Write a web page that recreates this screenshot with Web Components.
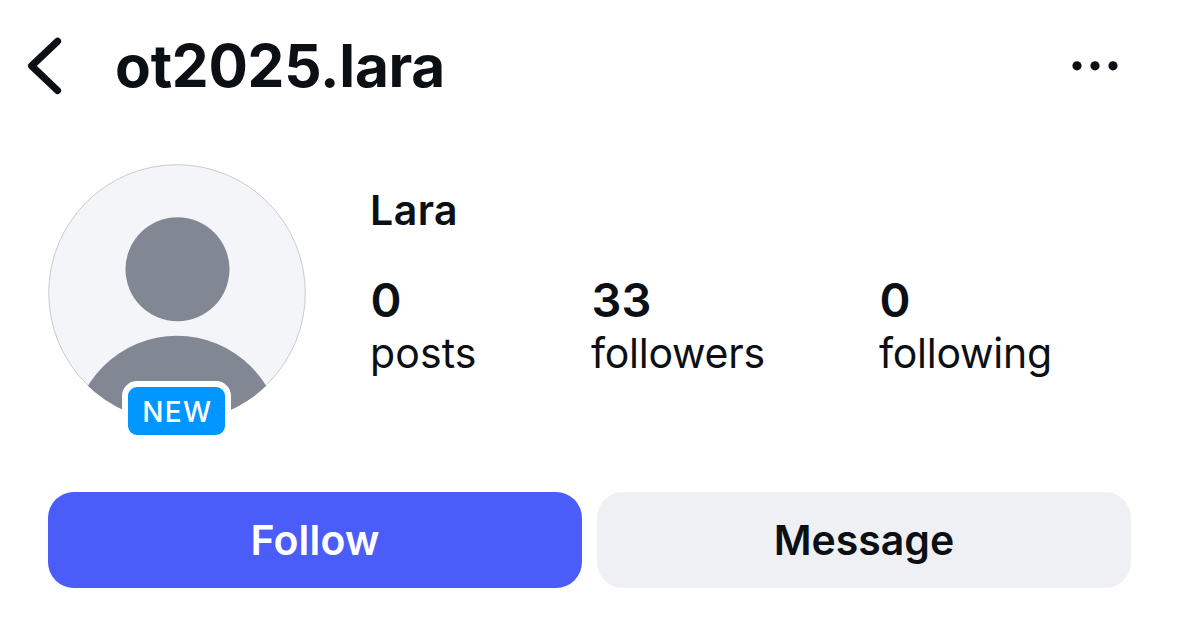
<!DOCTYPE html>
<html lang="en">
<head>
<meta charset="utf-8">
<title>ot2025.lara</title>
<style>
  body {
    margin: 0;
    background: #fff;
    color: #0c1014;
    font-family: Inter, "Liberation Sans", sans-serif;
  }
</style>
</head>
<body>
<profile-page></profile-page>

<script>
class ProfileHeader extends HTMLElement {
  constructor() {
    super();
    this.attachShadow({ mode: "open" });
    this.shadowRoot.innerHTML = `
      <style>
        :host {
          display: flex;
          align-items: center;
          height: 132px;
          padding: 0 57px 0 24px;
        }

        svg {
          display: block;
          flex: none;
        }

        h1 {
          flex: 1;
          margin: 0 0 0 49px;
          font-size: 58.5px;
          line-height: 72px;
          font-weight: 700;
          letter-spacing: -0.25px;
        }
      </style>

      <svg width="42" height="64" viewBox="0 0 42 64" fill="none" stroke="#0c1014"
        stroke-width="7.2" stroke-linecap="round" stroke-linejoin="round">
        <path d="M33.5 7.3 7.6 31.8 33.5 56.5"/>
      </svg>
      <h1><slot></slot></h1>
      <svg width="54" height="16" viewBox="0 0 54 16" fill="#0c1014">
        <circle cx="9" cy="7.8" r="4.6"/>
        <circle cx="27" cy="7.8" r="4.6"/>
        <circle cx="45" cy="7.8" r="4.6"/>
      </svg>
    `;
  }
}

class ProfileAvatar extends HTMLElement {
  constructor() {
    super();
    this.attachShadow({ mode: "open" });
    this.shadowRoot.innerHTML = `
      <style>
        :host {
          display: block;
          position: relative;
          width: 258px;
          height: 258px;
        }

        svg {
          display: block;
        }

        .badge {
          position: absolute;
          left: 74.3px;
          top: 217px;
          box-sizing: border-box;
          width: 109px;
          height: 60px;
          border: 6px solid #fff;
          border-radius: 15px;
          background: #0095ff;
          color: #fff;
          font-size: 28px;
          line-height: 50px;
          font-weight: 500;
          letter-spacing: 1.3px;
          text-indent: 1px;
          text-align: center;
        }
      </style>

      <svg width="258" height="258" viewBox="0 0 258 258">
        <defs>
          <clipPath id="round"><circle cx="129" cy="129" r="128.8"/></clipPath>
        </defs>
        <circle cx="129" cy="129" r="128.3" fill="#f3f5f8" stroke="#c9cbce"/>
        <g clip-path="url(#round)" fill="#828893">
          <circle cx="129.5" cy="105.3" r="52"/>
          <circle cx="129" cy="276.3" r="104.5"/>
        </g>
      </svg>
      <div class="badge"><slot></slot></div>
    `;
  }
}

class ProfileStat extends HTMLElement {
  constructor() {
    super();
    this.attachShadow({ mode: "open" });
    this.shadowRoot.innerHTML = `
      <style>
        :host {
          display: block;
        }

        .count {
          padding-left: 0.5px;
          font-size: 47px;
          line-height: 54px;
          font-weight: 600;
        }

        .label {
          font-size: 41px;
          line-height: 52px;
          letter-spacing: var(--label-spacing, -0.25px);
        }
      </style>

      <div class="count"></div>
      <div class="label"><slot></slot></div>
    `;
  }

  connectedCallback() {
    this.shadowRoot.querySelector(".count").textContent = this.getAttribute("count");
  }
}

class ProfileButton extends HTMLElement {
  constructor() {
    super();
    this.attachShadow({ mode: "open" });
    this.shadowRoot.innerHTML = `
      <style>
        :host {
          display: block;
        }

        button {
          display: block;
          width: 100%;
          height: 96px;
          padding: 0;
          border: 0;
          border-radius: 26px;
          background: #eff0f4;
          color: inherit;
          font: 600 41px/96px Inter, "Liberation Sans", sans-serif;
        }

        :host([primary]) button {
          background: #4a5df9;
          color: #fff;
          letter-spacing: 0.2px;
        }
      </style>

      <button type="button"><slot></slot></button>
    `;
  }
}

class ProfilePage extends HTMLElement {
  constructor() {
    super();
    this.attachShadow({ mode: "open" });
    this.shadowRoot.innerHTML = `
      <style>
        :host {
          display: block;
          height: 629px;
          overflow: hidden;
        }

        .summary {
          display: flex;
          gap: 64px;
          height: 328px;
          padding: 32px 48px 0;
          box-sizing: border-box;
        }

        .info {
          flex: 1;
        }

        h2 {
          margin: 19px 0 36px;
          font-size: 41px;
          line-height: 54px;
          font-weight: 600;
          letter-spacing: 0.5px;
        }

        .stats {
          display: grid;
          grid-template-columns: 221px 288px auto;
        }

        .posts {
          --label-spacing: 0.1px;
        }

        .actions {
          display: grid;
          grid-template-columns: 1fr 1fr;
          gap: 15px;
          padding: 32px 48px 0;
        }
      </style>

      <profile-header>ot2025.lara</profile-header>
      <section class="summary">
        <profile-avatar>NEW</profile-avatar>
        <div class="info">
          <h2>Lara</h2>
          <div class="stats">
            <profile-stat class="posts" count="0">posts</profile-stat>
            <profile-stat count="33">followers</profile-stat>
            <profile-stat count="0">following</profile-stat>
          </div>
        </div>
      </section>
      <div class="actions">
        <profile-button primary>Follow</profile-button>
        <profile-button>Message</profile-button>
      </div>
    `;
  }
}

customElements.define("profile-header", ProfileHeader);
customElements.define("profile-avatar", ProfileAvatar);
customElements.define("profile-stat", ProfileStat);
customElements.define("profile-button", ProfileButton);
customElements.define("profile-page", ProfilePage);
</script>
</body>
</html>
